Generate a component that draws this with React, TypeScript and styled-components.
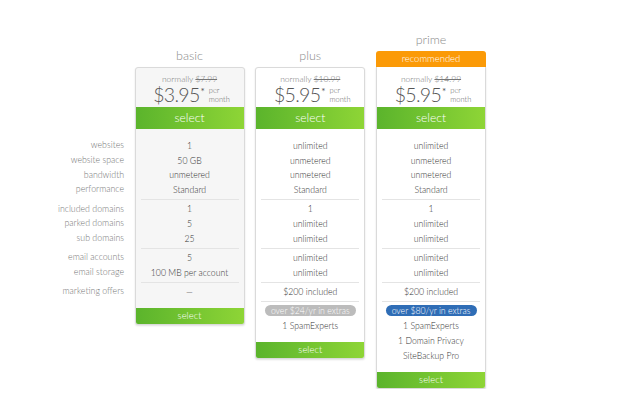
import React from 'react';
import styled, { createGlobalStyle } from 'styled-components';

const Global = createGlobalStyle`
  html, body { margin: 0; padding: 0; background: #fff; }
  body { font-family: Lato, "Open Sans", "Liberation Sans", sans-serif; }
`;

const Page = styled.div`
  display: flex;
  align-items: flex-start;
  padding: 32px 0 0 20px;
`;

const LabelColumn = styled.div`
  width: 104px;
  margin-right: 10.5px;
  padding-top: 104.25px;
  text-align: right;
  color: #777;
  font-size: 8.8px;
  font-weight: 300;
`;

const Columns = styled.div`
  display: flex;
  align-items: flex-start;
  gap: 10.75px;
`;

const PlanColumn = styled.div<{ $offset: boolean }>`
  width: 110px;
  padding-top: ${(p) => (p.$offset ? '16px' : '0')};
  display: flex;
  flex-direction: column;
`;

const PlanTitle = styled.div`
  height: 16px;
  line-height: 16px;
  margin-bottom: 3px;
  text-align: center;
  font-size: 12.5px;
  font-weight: 300;
  color: #8a8a8a;
`;

const Banner = styled.div`
  height: 16px;
  line-height: 16px;
  background: #fb9a07;
  color: #fff;
  text-align: center;
  font-size: 9.5px;
  font-weight: 300;
  border-radius: 3px 3px 0 0;
`;

const Card = styled.div<{ $tinted: boolean; $bannered: boolean }>`
  background: ${(p) => (p.$tinted ? '#f6f6f6' : '#fff')};
  border: 1px solid #dadada;
  border-top: ${(p) => (p.$bannered ? 'none' : '1px solid #dadada')};
  padding-top: ${(p) => (p.$bannered ? '1px' : '0')};
  border-radius: ${(p) => (p.$bannered ? '0 0 3px 3px' : '3px')};
  box-shadow: 0 1px 2px rgba(0, 0, 0, 0.12);
  overflow: hidden;
`;

const Header = styled.div`
  padding: 5px 0 2px;
  text-align: center;
`;

const Normally = styled.div`
  height: 12px;
  line-height: 12px;
  font-size: 8.5px;
  font-weight: 300;
  color: #777;
  s { color: #777; }
`;

const PriceRow = styled.div`
  display: flex;
  justify-content: center;
  align-items: flex-start;
  height: 20px;
  padding-left: 4px;
  color: #555;
`;

const Amount = styled.span`
  font-size: 19.5px;
  line-height: 20px;
  font-weight: 300;
  letter-spacing: -0.7px;
`;

const Star = styled.span`
  font-size: 10px;
  line-height: 10px;
  margin: 1px 0 0 1px;
`;

const PerMonth = styled.span`
  font-size: 7.5px;
  line-height: 8.5px;
  margin: 2px 0 0 4px;
  text-align: left;
  color: #666;
  font-weight: 300;
`;

const SelectBar = styled.div<{ $small: boolean }>`
  height: ${(p) => (p.$small ? '16px' : '22px')};
  line-height: ${(p) => (p.$small ? '16px' : '22px')};
  font-size: ${(p) => (p.$small ? '9.5px' : '12px')};
  margin-top: ${(p) => (p.$small ? '6.25px' : '0')};
  text-align: center;
  color: #fff;
  font-weight: 300;
  background: linear-gradient(to right, #5bb42c, #8ed536);
`;

const Body = styled.div`
  padding-top: 7.25px;
`;

const Group = styled.div<{ $divider: boolean }>`
  padding: 1.75px 0;
  margin: 0 5px;
  border-bottom: 1px solid ${(p) => (p.$divider ? '#e4e4e4' : 'transparent')};
`;

const LabelGroup = styled.div`
  padding: 1.75px 0;
  border-bottom: 1px solid transparent;
`;

const Row = styled.div`
  height: 14.75px;
  display: flex;
  align-items: center;
  justify-content: center;
  font-size: 8.7px;
  font-weight: 300;
  color: #333;
  white-space: nowrap;
`;

const LabelRow = styled.div`
  height: 14.75px;
  line-height: 14.75px;
  white-space: nowrap;
`;

const Pill = styled.span<{ $color: string }>`
  display: inline-block;
  width: 91px;
  height: 11px;
  line-height: 11px;
  border-radius: 6px;
  background: ${(p) => p.$color};
  color: #fff;
  text-align: center;
  font-size: 8.7px;
  font-weight: 300;
`;

type Plan = {
  name: string;
  normal: string;
  price: string;
  recommended?: boolean;
  tinted?: boolean;
  groups: string[][];
  extras?: { pill: string; color: string; items: string[] };
};

const plans: Plan[] = [
  {
    name: 'basic',
    normal: '$7.99',
    price: '$3.95',
    tinted: true,
    groups: [
      ['1', '50 GB', 'unmetered', 'Standard'],
      ['1', '5', '25'],
      ['5', '100 MB per account'],
      ['—'],
    ],
  },
  {
    name: 'plus',
    normal: '$10.99',
    price: '$5.95',
    groups: [
      ['unlimited', 'unmetered', 'unmetered', 'Standard'],
      ['1', 'unlimited', 'unlimited'],
      ['unlimited', 'unlimited'],
      ['$200 included'],
    ],
    extras: { pill: 'over $24/yr in extras', color: '#bcbcbc', items: ['1 SpamExperts'] },
  },
  {
    name: 'prime',
    normal: '$14.99',
    price: '$5.95',
    recommended: true,
    groups: [
      ['unlimited', 'unmetered', 'unmetered', 'Standard'],
      ['1', 'unlimited', 'unlimited'],
      ['unlimited', 'unlimited'],
      ['$200 included'],
    ],
    extras: {
      pill: 'over $80/yr in extras',
      color: '#2f6db6',
      items: ['1 SpamExperts', '1 Domain Privacy', 'SiteBackup Pro'],
    },
  },
];

const labelGroups = [
  ['websites', 'website space', 'bandwidth', 'performance'],
  ['included domains', 'parked domains', 'sub domains'],
  ['email accounts', 'email storage'],
  ['marketing offers'],
];

function PlanCard({ plan }: { plan: Plan }) {
  const groups = plan.groups;
  return (
    <PlanColumn $offset={!plan.recommended}>
      <PlanTitle>{plan.name}</PlanTitle>
      {plan.recommended && <Banner>recommended</Banner>}
      <Card $tinted={!!plan.tinted} $bannered={!!plan.recommended}>
        <Header>
          <Normally>
            normally <s>{plan.normal}</s>
          </Normally>
          <PriceRow>
            <Amount>{plan.price}</Amount>
            <Star>*</Star>
            <PerMonth>
              per
              <br />
              month
            </PerMonth>
          </PriceRow>
        </Header>
        <SelectBar $small={false}>select</SelectBar>
        <Body>
          {groups.map((g, i) => (
            <Group key={i} $divider={i < groups.length - 1 || !!plan.extras}>
              {g.map((v, j) => (
                <Row key={j}>{v}</Row>
              ))}
            </Group>
          ))}
          {plan.extras && (
            <Group $divider={false}>
              <Row>
                <Pill $color={plan.extras.color}>{plan.extras.pill}</Pill>
              </Row>
              {plan.extras.items.map((it) => (
                <Row key={it}>{it}</Row>
              ))}
            </Group>
          )}
        </Body>
        <SelectBar $small>select</SelectBar>
      </Card>
    </PlanColumn>
  );
}

export default function App() {
  return (
    <>
      <Global />
      <Page>
        <LabelColumn>
          {labelGroups.map((g, i) => (
            <LabelGroup key={i}>
              {g.map((l) => (
                <LabelRow key={l}>{l}</LabelRow>
              ))}
            </LabelGroup>
          ))}
        </LabelColumn>
        <Columns>
          {plans.map((p) => (
            <PlanCard key={p.name} plan={p} />
          ))}
        </Columns>
      </Page>
    </>
  );
}
